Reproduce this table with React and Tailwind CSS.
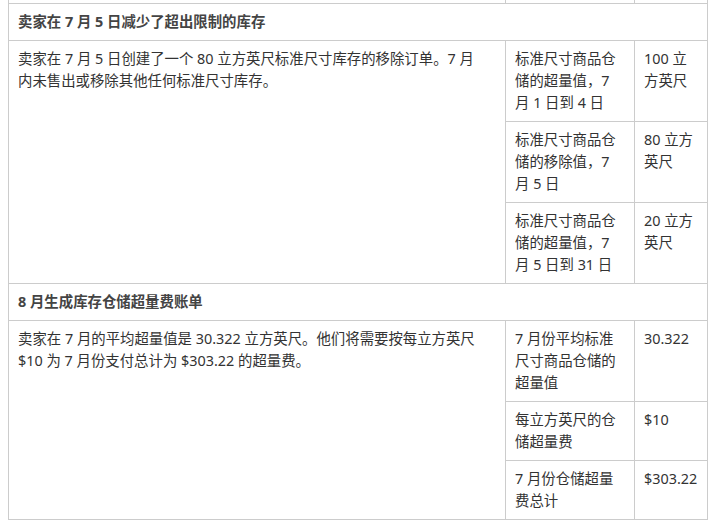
export default function App() {
  const cell = "border border-[#cccccc] align-top pl-[9px] pr-[10px] py-[7px]";
  const wide = "border border-[#cccccc] align-top pl-[9px] pr-[20px] py-[7px]";
  const head = "border border-[#cccccc] px-[9px] py-[7px] font-bold text-[#444444]";

  return (
    <div
      className="w-[712px] h-[525px] overflow-hidden bg-white pl-[8px] text-[14.4px] leading-[22px] text-[#333333]"
      style={{ fontFamily: '"Noto Sans", "Noto Sans CJK SC", sans-serif' }}
    >
      <table className="table-fixed border-collapse w-[699px]">
        <colgroup>
          <col className="w-[497px]" />
          <col className="w-[129px]" />
          <col className="w-[73px]" />
        </colgroup>
        <tbody>
          {/* tail of the previous row, scrolled off the top */}
          <tr className="h-[3px]">
            <td className="border-x border-b border-[#cccccc] p-0 h-[3px]"></td>
            <td className="border-x border-b border-[#cccccc] p-0 h-[3px]"></td>
            <td className="border-x border-b border-[#cccccc] p-0 h-[3px]"></td>
          </tr>

          <tr>
            <td colSpan={3} className={head}>
              卖家在 7 月 5 日减少了超出限制的库存
            </td>
          </tr>
          <tr>
            <td rowSpan={3} className={wide}>
              卖家在 7 月 5 日创建了一个 80 立方英尺标准尺寸库存的移除订单。7 月内未售出或移除其他任何标准尺寸库存。
            </td>
            <td className={cell}>标准尺寸商品仓储的超量值，7 月 1 日到 4 日</td>
            <td className={cell}>100 立方英尺</td>
          </tr>
          <tr>
            <td className={cell}>标准尺寸商品仓储的移除值，7 月 5 日</td>
            <td className={cell}>80 立方英尺</td>
          </tr>
          <tr>
            <td className={cell}>标准尺寸商品仓储的超量值，7 月 5 日到 31 日</td>
            <td className={cell}>20 立方英尺</td>
          </tr>

          <tr>
            <td colSpan={3} className={head}>
              8 月生成库存仓储超量费账单
            </td>
          </tr>
          <tr>
            <td rowSpan={3} className={wide}>
              卖家在 7 月的平均超量值是 30.322 立方英尺。他们将需要按每立方英尺 $10 为 7 月份支付总计为 $303.22 的超量费。
            </td>
            <td className={cell}>7 月份平均标准尺寸商品仓储的超量值</td>
            <td className={cell}>30.322</td>
          </tr>
          <tr>
            <td className={cell}>每立方英尺的仓储超量费</td>
            <td className={cell}>$10</td>
          </tr>
          <tr>
            <td className={cell}>7 月份仓储超量费总计</td>
            <td className={cell}>$303.22</td>
          </tr>
        </tbody>
      </table>
    </div>
  );
}
